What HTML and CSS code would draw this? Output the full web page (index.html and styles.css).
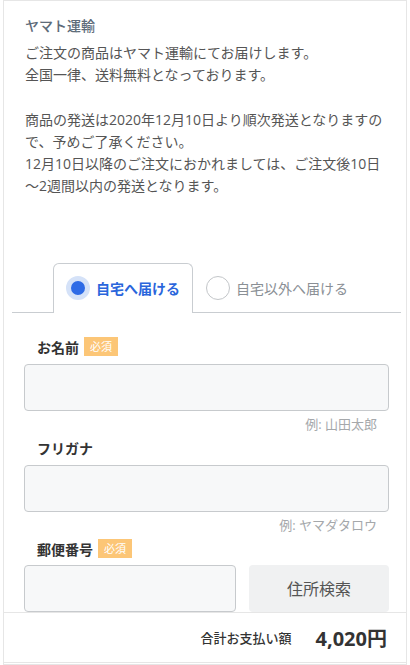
FILE: index.html
```html
<!DOCTYPE html>
<html lang="ja">
<head>
  <meta charset="UTF-8" />
  <meta name="viewport" content="width=device-width, initial-scale=1.0"/>
  <title>お届け先の入力</title>
  <link rel="stylesheet" href="styles.css">
</head>
<body>
  <div class="page">
    <section class="delivery-info">
      <h2>ヤマト運輸</h2>
      <p>ご注文の商品はヤマト運輸にてお届けします。<br/>全国一律、送料無料となっております。</p>
      <p>商品の発送は2020年12月10日より順次発送となりますので、予めご了承ください。<br/>12月10日以降のご注文におかれましては、ご注文後10日～2週間以内の発送となります。</p>
    </section>

    <div class="tabs">
      <label class="tab active">
        <span class="radio"></span>
        自宅へ届ける
      </label>
      <label class="tab">
        <span class="radio"></span>
        自宅以外へ届ける
      </label>
    </div>

    <form class="address-form">
      <div class="field">
        <div class="field-label">お名前<span class="required">必須</span></div>
        <input type="text" class="text-input" />
        <div class="hint">例: 山田太郎</div>
      </div>
      <div class="field">
        <div class="field-label">フリガナ</div>
        <input type="text" class="text-input" />
        <div class="hint">例: ヤマダタロウ</div>
      </div>
      <div class="field">
        <div class="field-label">郵便番号<span class="required">必須</span></div>
        <div class="zip-row">
          <input type="text" class="text-input zip" />
          <button type="button" class="search-btn">住所検索</button>
        </div>
      </div>
    </form>
  </div>

  <footer class="total-bar">
    <span class="total-label">合計お支払い額</span>
    <span class="total-price">4,020円</span>
  </footer>
</body>
</html>
```

FILE: styles.css
```css
body {
  margin: 0;
  font-family: "Open Sans", "Noto Sans CJK JP", sans-serif;
  color: #555;
  background: #fff;
}
.page {
  margin: 0 3px;
  border: 1px solid #e6e6e6;
  min-height: 100vh;
  box-sizing: border-box;
}
.delivery-info {
  padding: 14px 12px 0 21px;
}
.delivery-info h2 {
  margin: 0;
  font-size: 14px;
  font-weight: 500;
  line-height: 22px;
  color: #5d6b79;
}
.delivery-info p {
  margin: 5px 0 22px;
  font-size: 14px;
  line-height: 22.3px;
  line-break: loose;
}
.tabs {
  display: flex;
  margin: 65px 5px 0 8px;
  padding-left: 41px;
  border-bottom: 1px solid #c9cdd1;
}
.tab {
  display: flex;
  align-items: center;
  gap: 6px;
  height: 48px;
  padding: 0 12px;
  font-size: 14px;
  color: #8a8f95;
  border: 1px solid transparent;
  border-bottom: none;
  margin-bottom: -1px;
}
.tab.active {
  color: #2a66dc;
  font-weight: bold;
  background: #fff;
  border-color: #c9cdd1;
  border-radius: 6px 6px 0 0;
  height: 49px;
  padding-right: 12px;
}
.radio {
  width: 24px;
  height: 24px;
  border: 1px solid #c3c6c9;
  border-radius: 50%;
  box-sizing: border-box;
  flex-shrink: 0;
}
.tab.active .radio {
  border: 5px solid #d5e2f8;
  background: #2e6be6;
}
.address-form {
  padding: 24px 17px 0 20px;
}
.field-label {
  display: flex;
  align-items: center;
  height: 20px;
  padding-left: 13px;
  font-size: 14px;
  font-weight: bold;
  color: #333;
}
.required {
  margin-left: 5px;
  padding: 0 6px;
  line-height: 19px;
  font-size: 11px;
  font-weight: normal;
  color: #fff;
  background: #fcc677;
}
.text-input {
  display: block;
  width: 100%;
  height: 47px;
  margin-top: 7px;
  box-sizing: border-box;
  border: 1px solid #c7cacd;
  border-radius: 4px;
  background: #f7f8f9;
  font-size: 16px;
}
.hint {
  text-align: right;
  padding-right: 12px;
  font-size: 13px;
  line-height: 20px;
  margin-top: 3px;
  margin-bottom: 4px;
  color: #a5a8ab;
}
.zip-row {
  display: flex;
  gap: 13px;
  margin-top: 6px;
}
.zip-row .text-input {
  margin-top: 0;
  flex: 0 0 212px;
}
.search-btn {
  flex: 1;
  height: 47px;
  border: none;
  border-radius: 4px;
  background: #f0f1f2;
  font-family: inherit;
  font-size: 16px;
  color: #555;
}
.total-bar {
  position: fixed;
  left: 3px;
  right: 3px;
  bottom: 2px;
  height: 49px;
  display: flex;
  align-items: center;
  justify-content: flex-end;
  gap: 24px;
  padding-right: 19px;
  background: #fff;
  border: 1px solid #e6e6e6;
}
.total-label {
  font-size: 13px;
  font-weight: 500;
  color: #333;
}
.total-price {
  font-size: 20px;
  font-weight: bold;
  color: #333;
}
```
